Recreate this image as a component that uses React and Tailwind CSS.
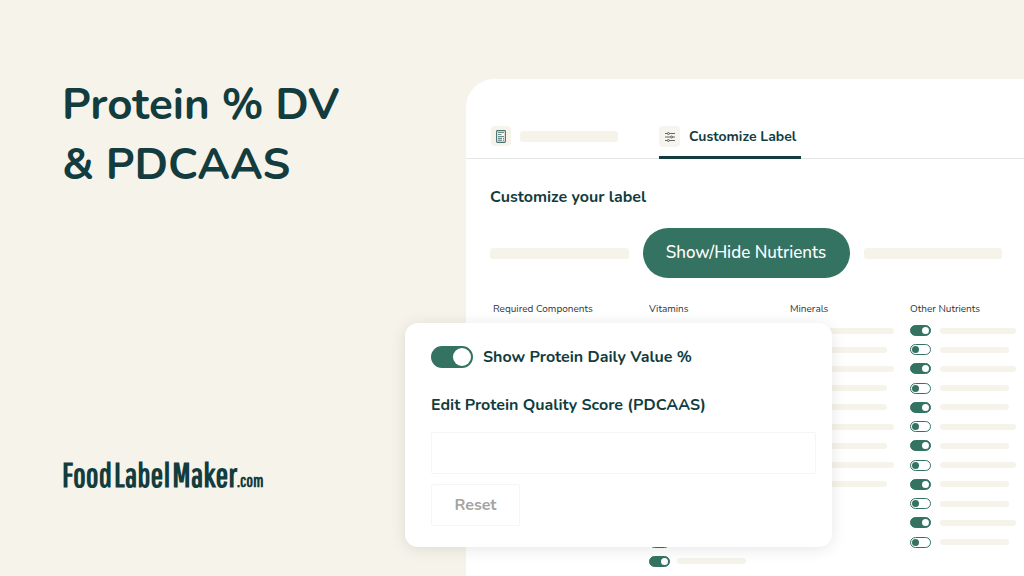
import React from "react";

const bars = {
  l: "w-[76px]",
  s: "w-[69px]",
};

const columns = [
  { title: "Required Components", rows: "lslsslslsls", gap: "gap-[7px]" },
  { title: "Vitamins", rows: "lslsslslsslss", gap: "gap-[7px]" },
  { title: "Minerals", rows: "lslsslsls", gap: "gap-[7px]" },
  { title: "Other Nutrients", rows: "lslsslslssls", gap: "gap-[9px]" },
];

function MiniToggle({ on, label }) {
  return (
    <input
      type="checkbox"
      role="switch"
      aria-label={label}
      defaultChecked={on}
      className="flex h-[11px] w-[21px] shrink-0 appearance-none items-center rounded-full border border-[#347362] bg-white px-px before:size-[7px] before:rounded-full before:bg-[#347362] checked:justify-end checked:bg-[#347362] checked:before:bg-white"
    />
  );
}

function NutrientColumn({ title, rows, gap }) {
  return (
    <section>
      <h3 className="text-[10px] leading-[14px] text-[#333]">{title}</h3>
      <ul className="mt-[9px] grid h-[250px] grid-rows-[repeat(13,minmax(0,1fr))]">
        {rows.split("").map((size, i) => (
          <li key={i} className={`flex h-[11px] items-center ${gap}`}>
            <MiniToggle on={i % 2 === 0} label={`${title} ${i + 1}`} />
            <span className={`h-[6px] rounded-full bg-[#f6f3eb] ${bars[size]}`} />
          </li>
        ))}
      </ul>
    </section>
  );
}

function LabelIcon() {
  return (
    <svg viewBox="0 0 10 13" className="h-[13px] w-[10px]" fill="none" stroke="#4a726e" aria-hidden="true">
      <rect x="0.6" y="0.6" width="8.8" height="11.8" rx="0.8" strokeWidth="1.1" />
      <path d="M2 2.5h6M2 4.5h3.4M2 6.5h6" strokeWidth="0.8" />
      <path d="M2 8.3h4M7 8.3h1M2 10.2h4M7 10.2h1" strokeWidth="1" />
    </svg>
  );
}

function SlidersIcon() {
  return (
    <svg viewBox="0 0 12 12" className="size-[12px]" fill="none" stroke="#555" strokeWidth="0.9" aria-hidden="true">
      <path d="M1 2.5h2.4M5.4 2.5H11M1 6h5.6M8.6 6H11M1 9.5h2.4M5.4 9.5H11" />
      <circle cx="4.4" cy="2.5" r="1" />
      <circle cx="7.6" cy="6" r="1" />
      <circle cx="4.4" cy="9.5" r="1" />
    </svg>
  );
}

export default function App() {
  return (
    <div className="relative flex h-screen overflow-hidden bg-[#f6f3eb] font-['Nunito','Lato',sans-serif] text-[#123c3d]">
      <header className="flex w-[466px] shrink-0 flex-col justify-between pt-[75px] pb-[77px] pl-[62px]">
        <h1 className="text-[44px] leading-[60px] font-bold whitespace-nowrap">
          Protein % DV
          <br />
          &amp; PDCAAS
        </h1>
        <p className="flex items-baseline font-['Pathway_Gothic_One','Oswald',sans-serif] text-[34px] leading-[36px] font-bold whitespace-nowrap">
          <span>Food</span>
          <span className="ml-[2px]">Label</span>
          <span className="ml-[2px]">Maker</span>
          <span className="text-[18px]">.com</span>
        </p>
      </header>

      <main className="mt-[79px] min-w-0 flex-1 rounded-tl-[28px] bg-white">
        <nav className="flex h-[80px] items-end gap-[41px] border-b border-[#e5e7e7] pl-[25px]">
          <button type="button" aria-label="Label preview" className="flex h-[32px] items-start gap-[9px]">
            <span className="flex size-[20px] items-center justify-center rounded-[4px] bg-[#f6f3eb]">
              <LabelIcon />
            </span>
            <span className="mt-[5px] h-[11px] w-[98px] rounded-[3px] bg-[#f6f3eb]" />
          </button>
          <button
            type="button"
            aria-current="page"
            className="-mb-px flex h-[33px] items-start gap-[9px] border-b-[3px] border-[#123c3d] pr-[5px] text-[14px] leading-[22px] font-bold whitespace-nowrap"
          >
            <span className="flex size-[21px] items-center justify-center rounded-[4px] bg-[#f6f4ee]">
              <SlidersIcon />
            </span>
            Customize Label
          </button>
        </nav>

        <h2 className="mt-[26px] pl-[24px] text-[16px] leading-[24px] font-bold">Customize your label</h2>

        <div className="mt-[19px] flex items-center gap-[14px] pr-[22px] pl-[24px]">
          <span className="h-[11px] flex-1 rounded-[3px] bg-[#f6f3eb]" />
          <button
            type="button"
            className="h-[50px] w-[207px] rounded-full bg-[#347362] text-[17px] leading-[24px] font-medium whitespace-nowrap text-white"
          >
            Show/Hide Nutrients
          </button>
          <span className="h-[11px] flex-1 rounded-[3px] bg-[#f6f3eb]" />
        </div>

        <div className="mt-[24px] grid grid-cols-[156fr_141fr_120fr_114fr] pl-[27px]">
          {columns.map((column) => (
            <NutrientColumn key={column.title} {...column} />
          ))}
        </div>
      </main>

      <form
        onSubmit={(event) => event.preventDefault()}
        className="absolute top-[323px] left-[405px] flex w-[427px] flex-col items-start rounded-[13px] bg-white pt-[22px] pr-[16px] pb-[21px] pl-[26px] text-[16px] font-bold shadow-[0_2px_16px_rgba(0,0,0,0.1)]"
      >
        <label className="flex items-center gap-[10px] leading-[24px]">
          <input
            type="checkbox"
            role="switch"
            defaultChecked
            className="flex h-[22px] w-[42px] appearance-none items-center rounded-full border-2 border-[#347362] bg-white before:size-[18px] before:rounded-full before:bg-[#347362] checked:justify-end checked:bg-[#347362] checked:before:bg-white"
          />
          Show Protein Daily Value %
        </label>
        <label htmlFor="pdcaas" className="mt-[24px] leading-[24px]">
          Edit Protein Quality Score (PDCAAS)
        </label>
        <input
          id="pdcaas"
          type="text"
          className="mt-[15px] h-[42px] w-full rounded-[2px] border border-[#f5f5f5] bg-white px-[12px]"
        />
        <button
          type="reset"
          className="mt-[10px] h-[42px] w-[89px] rounded-[2px] border border-[#f5f5f5] bg-white text-[#a3a3a3]"
        >
          Reset
        </button>
      </form>
    </div>
  );
}
